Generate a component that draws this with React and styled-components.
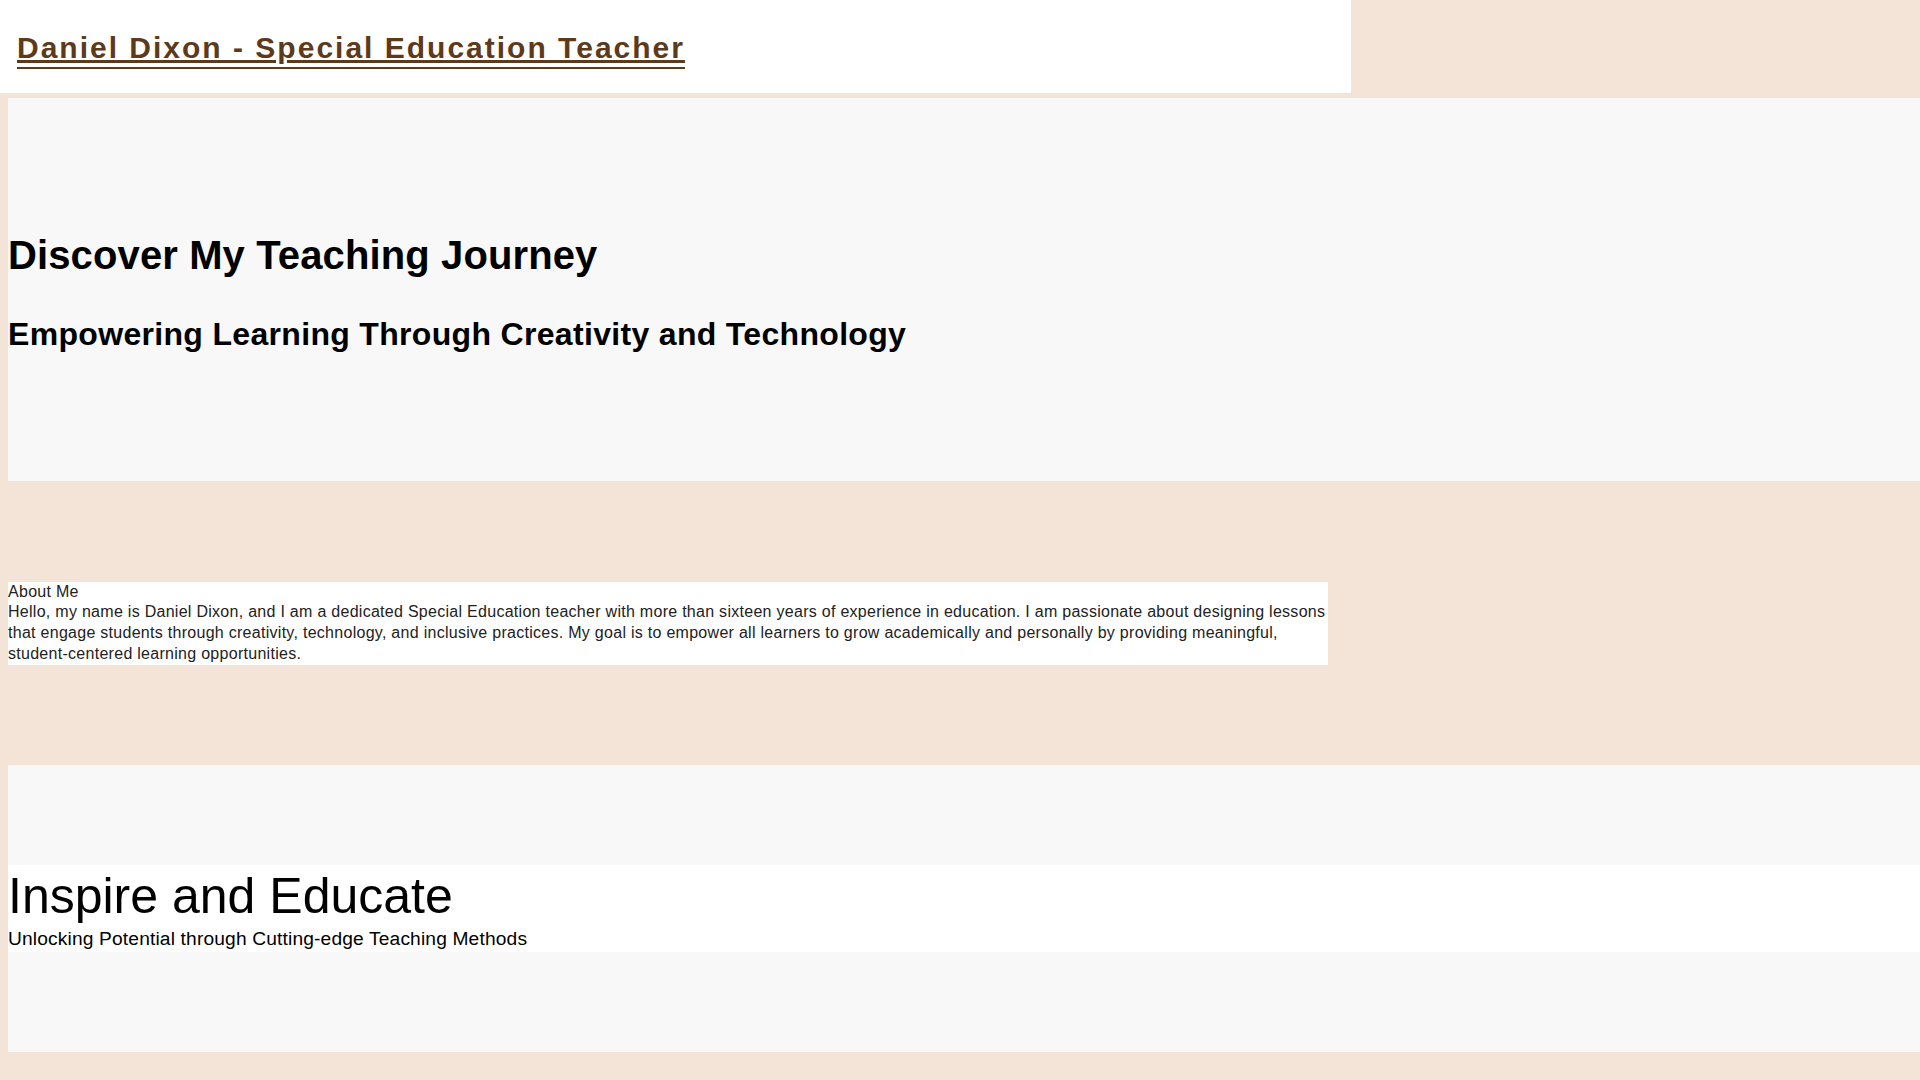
import React from "react";
import styled, { createGlobalStyle } from "styled-components";

const GlobalStyle = createGlobalStyle`
  html, body {
    margin: 0;
    padding: 0;
  }
  body {
    background: #f4e4d7;
    font-family: "Liberation Sans", Arial, sans-serif;
    font-size: 16px;
    line-height: 1.3;
    color: #000;
  }
`;

const Header = styled.header`
  box-sizing: border-box;
  width: 1351px;
  height: 93px;
  margin-bottom: 5px;
  padding: 31px 17px 0;
  background: #fff;
`;

const SiteName = styled.h1`
  margin: 0;
  font-size: 30px;
  font-weight: bold;
  line-height: normal;
  letter-spacing: 2px;
`;

const SiteLink = styled.a`
  color: #5c3a1b;
  text-decoration: underline;
  padding-bottom: 2.5px;
  border-bottom: 2px solid #5c3a1b;
`;

const Main = styled.main`
  width: 100%;
  margin-left: 8px;
`;

const Hero = styled.section`
  background: #f8f8f8;
  padding: 100px 0;
`;

const HeroTitle = styled.h1`
  margin: 31px 0 33px;
  font-size: 40px;
  line-height: 1.3;
  letter-spacing: 0.12px;
`;

const HeroSubtitle = styled.h2`
  margin: 0 0 25px;
  font-size: 32px;
  line-height: 1.3;
  letter-spacing: 0.32px;
`;

const CardSection = styled.section`
  padding: 101px 0 100px;
`;

const Card = styled.div`
  width: 1320px;
  background: #fff;
  color: #222;
  letter-spacing: 0.28px;
`;

const CardTitle = styled.h2`
  margin: 0;
  font-size: 16px;
  font-weight: normal;
  line-height: 1.3;
`;

const CardText = styled.p`
  margin: 0;
`;

const Banner = styled.section`
  background: #f8f8f8;
  padding: 100px 0;
`;

const BannerInner = styled.div`
  background: #fff;
`;

const BannerTitle = styled.h1`
  margin: 0;
  font-size: 50px;
  font-weight: normal;
  line-height: 62px;
`;

const BannerText = styled.p`
  margin: 0;
  font-size: 19.2px;
  letter-spacing: 0.15px;
`;

const Footer = styled.footer`
  padding: 100px 0 ${(p) => p.$bottom}px;
  color: #222;
`;

const about = {
  title: "About Me",
  text: "Hello, my name is Daniel Dixon, and I am a dedicated Special Education teacher with more than sixteen years of experience in education. I am passionate about designing lessons that engage students through creativity, technology, and inclusive practices. My goal is to empower all learners to grow academically and personally by providing meaningful, student-centered learning opportunities.",
};

const moreCards = [
  {
    title: "My Approach",
    text: "Every student learns differently. I build individualized plans, use assistive technology, and work closely with families and colleagues so that each learner can find success in a supportive classroom.",
  },
  {
    title: "Experience",
    text: "Over sixteen years I have taught in resource rooms, inclusive classrooms and self-contained programs, leading professional development on differentiated instruction and universal design for learning.",
  },
  {
    title: "Contact",
    text: "I am always happy to talk with families, colleagues and schools about inclusive education and new ideas for the classroom.",
  },
];

const InfoCard = ({ title, text }) => (
  <CardSection>
    <Card>
      <CardTitle>{title}</CardTitle>
      <CardText>{text}</CardText>
    </Card>
  </CardSection>
);

export default function App() {
  return (
    <>
      <GlobalStyle />
      <Header>
        <SiteName>
          <SiteLink href="#">Daniel Dixon - Special Education Teacher</SiteLink>
        </SiteName>
      </Header>
      <Main>
        <Hero>
          <HeroTitle>Discover My Teaching Journey</HeroTitle>
          <HeroSubtitle>Empowering Learning Through Creativity and Technology</HeroSubtitle>
        </Hero>

        <InfoCard title={about.title} text={about.text} />

        <Banner>
          <BannerInner>
            <BannerTitle>Inspire and Educate</BannerTitle>
            <BannerText>Unlocking Potential through Cutting-edge Teaching Methods</BannerText>
          </BannerInner>
        </Banner>

        {moreCards.slice(0, 2).map((c) => (
          <InfoCard key={c.title} title={c.title} text={c.text} />
        ))}

        <Banner>
          <BannerInner>
            <BannerTitle>Let's Connect</BannerTitle>
            <BannerText>Building Inclusive Classrooms Together</BannerText>
          </BannerInner>
        </Banner>

        <InfoCard title={moreCards[2].title} text={moreCards[2].text} />

        <Footer $bottom={780}>
          <CardText>&copy; 2024 Daniel Dixon. All rights reserved.</CardText>
        </Footer>
      </Main>
    </>
  );
}
